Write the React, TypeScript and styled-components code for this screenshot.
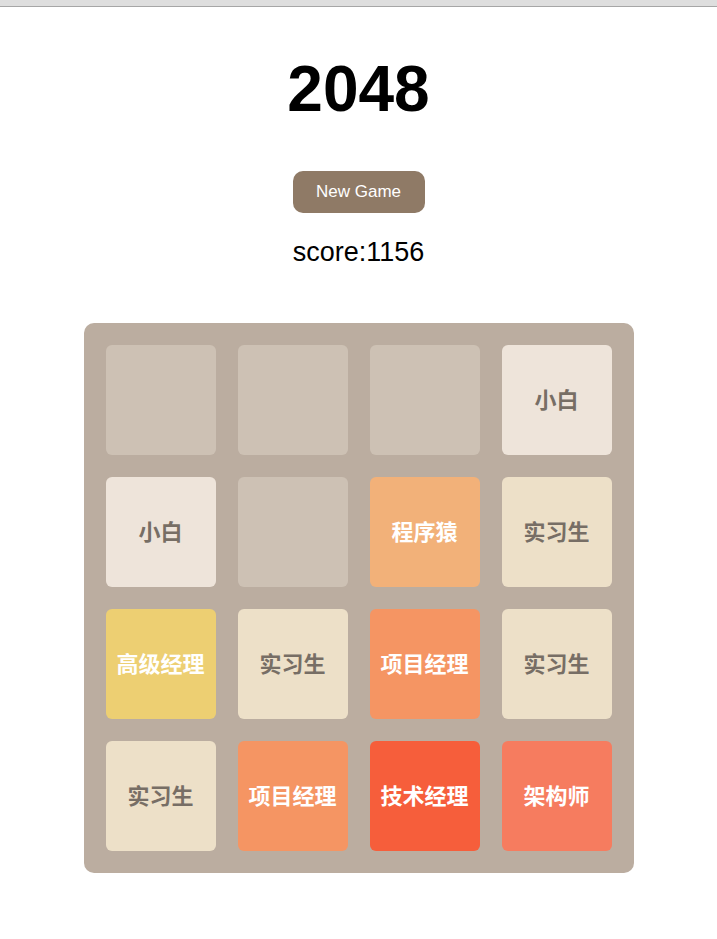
import React from "react";
import styled, { createGlobalStyle } from "styled-components";

const GlobalStyle = createGlobalStyle`
  html, body {
    margin: 0;
    padding: 0;
    background: #ffffff;
  }
  body {
    font-family: "Liberation Sans", Arial, sans-serif;
  }
`;

const ChromeStrip = styled.div`
  height: 6px;
  background: #dedede;
  border-bottom: 1px solid #a6a6a6;
`;

const Page = styled.main`
  display: flex;
  flex-direction: column;
  align-items: center;
`;

const Title = styled.h1`
  margin: 50px 0 0;
  font-family: "Liberation Sans", Arial, sans-serif;
  font-size: 64px;
  line-height: 64px;
  font-weight: bold;
  color: #000;
`;

const NewGameButton = styled.button`
  margin-top: 50px;
  width: 132px;
  height: 42px;
  border: none;
  border-radius: 10px;
  background: #8f7a66;
  color: #ffffff;
  font-family: "Liberation Sans", Arial, sans-serif;
  font-size: 17px;
  padding: 0;
  cursor: pointer;
`;

const Score = styled.p`
  margin: 26px 0 0;
  font-family: "Liberation Sans", Arial, sans-serif;
  font-size: 27px;
  line-height: 26px;
  color: #000;
`;

const Board = styled.div`
  margin-top: 58px;
  width: 550px;
  box-sizing: border-box;
  padding: 22px;
  border-radius: 10px;
  background: #bbada0;
  display: grid;
  grid-template-columns: repeat(4, 110px);
  grid-auto-rows: 110px;
  gap: 22px;
`;

type TileProps = { $bg: string; $fg: string };

const Tile = styled.div<TileProps>`
  border-radius: 6px;
  background: ${(p) => p.$bg};
  color: ${(p) => p.$fg};
  display: flex;
  align-items: center;
  justify-content: center;
  font-family: "Noto Sans CJK SC", "Noto Sans", sans-serif;
  font-weight: bold;
  font-size: 22px;
  line-height: 1;
  padding-bottom: 4px;
  box-sizing: border-box;
`;

const tileStyles: Record<number, { bg: string; fg: string; label: string }> = {
  0: { bg: "#cdc1b4", fg: "#776e65", label: "" },
  2: { bg: "#eee4da", fg: "#776e65", label: "小白" },
  4: { bg: "#ede0c8", fg: "#776e65", label: "实习生" },
  8: { bg: "#f2b179", fg: "#ffffff", label: "程序猿" },
  16: { bg: "#f59563", fg: "#ffffff", label: "项目经理" },
  32: { bg: "#f67c5f", fg: "#ffffff", label: "架构师" },
  64: { bg: "#f65e3b", fg: "#ffffff", label: "技术经理" },
  128: { bg: "#edcf72", fg: "#ffffff", label: "高级经理" },
};

const grid: number[][] = [
  [0, 0, 0, 2],
  [2, 0, 8, 4],
  [128, 4, 16, 4],
  [4, 16, 64, 32],
];

export default function App() {
  return (
    <>
      <GlobalStyle />
      <ChromeStrip />
      <Page>
        <Title>2048</Title>
        <NewGameButton>New Game</NewGameButton>
        <Score>score:1156</Score>
        <Board>
          {grid.flat().map((v, i) => {
            const s = tileStyles[v];
            return (
              <Tile key={i} $bg={s.bg} $fg={s.fg}>
                {s.label}
              </Tile>
            );
          })}
        </Board>
      </Page>
    </>
  );
}
